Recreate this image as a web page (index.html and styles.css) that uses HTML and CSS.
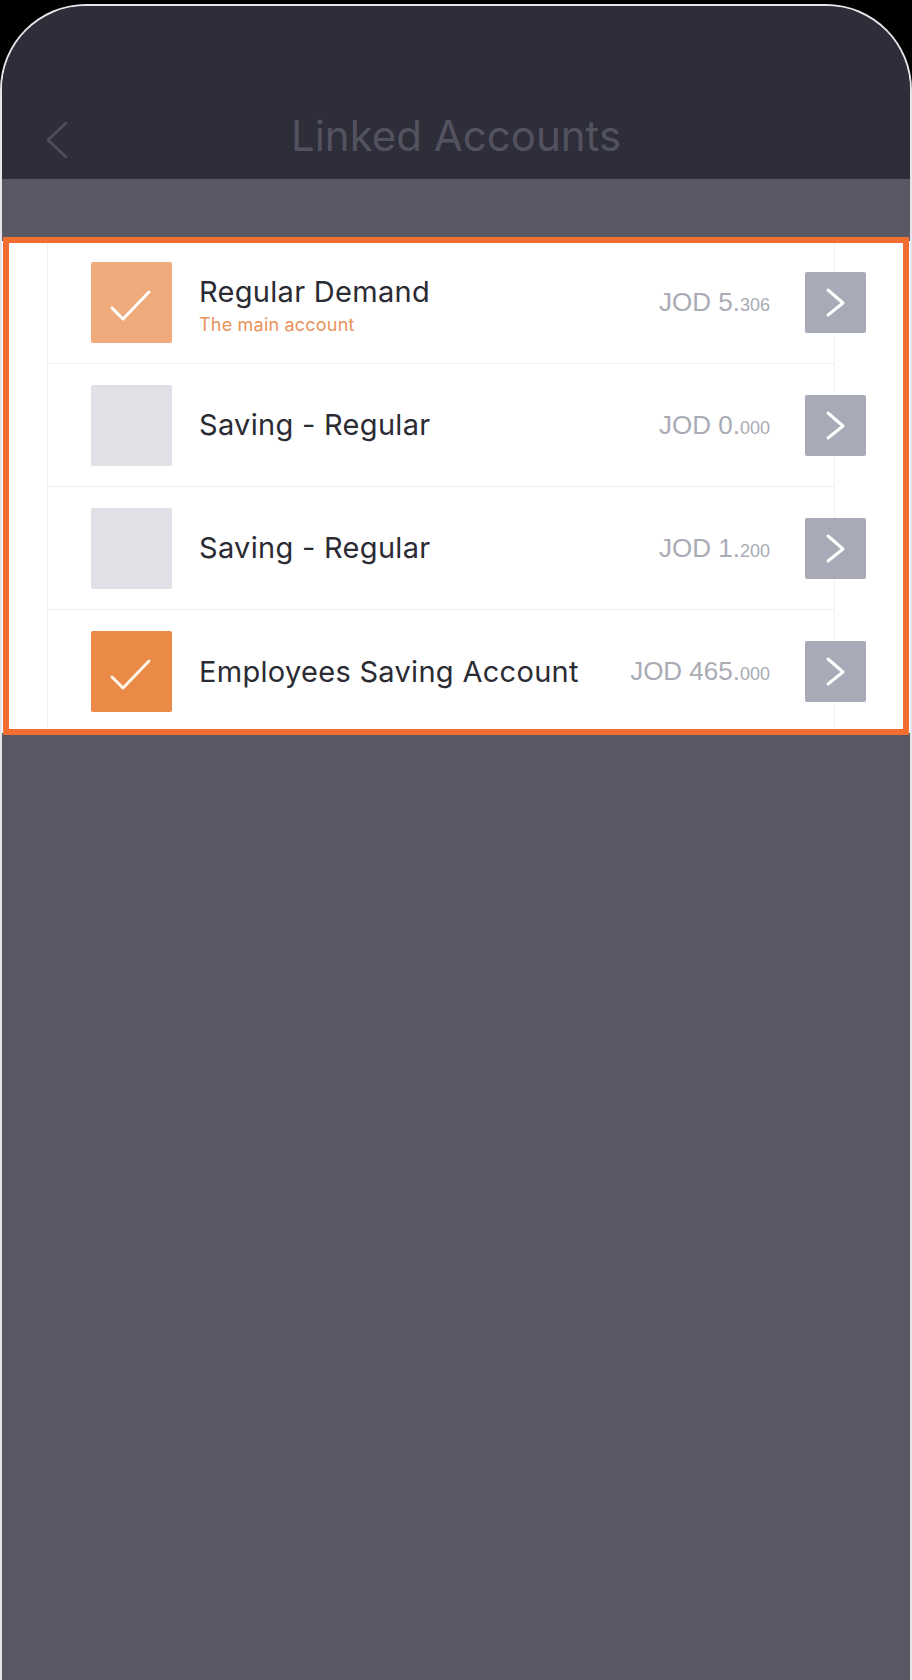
FILE: index.html
```html
<!DOCTYPE html>
<html lang="en">
<head>
    <meta charset="UTF-8">
    <title>Linked Accounts</title>
    <link rel="stylesheet" href="styles.css">
</head>
<body>
    <div class="phone">
        <header class="topbar">
            <button class="back" aria-label="Back">
                <svg width="26" height="40" viewBox="0 0 26 40"><polyline points="21,3 3,20 21,37" fill="none" stroke="#4f4e5d" stroke-width="2.6" stroke-linecap="round" stroke-linejoin="round"/></svg>
            </button>
            <h1>Linked Accounts</h1>
            <span></span>
        </header>

        <div class="spacer"></div>

        <section class="list">
            <div class="card">
                <div class="row">
                    <span class="check on light">
                        <svg width="81" height="81" viewBox="0 0 81 81"><polyline points="21,46 32,57 58,30" fill="none" stroke="#fff" stroke-width="3" stroke-linecap="round" stroke-linejoin="round"/></svg>
                    </span>
                    <div class="name with-sub">
                        <div class="title">Regular Demand</div>
                        <div class="sub">The main account</div>
                    </div>
                    <div class="amount">JOD 5.<small>306</small></div>
                    <span class="go"><svg width="61" height="61" viewBox="0 0 61 61"><polyline points="23,18 38,31 23,43" fill="none" stroke="#fff" stroke-width="3" stroke-linecap="round" stroke-linejoin="round"/></svg></span>
                </div>
                <div class="row">
                    <span class="check"></span>
                    <div class="name">
                        <div class="title">Saving - Regular</div>
                    </div>
                    <div class="amount">JOD 0.<small>000</small></div>
                    <span class="go"><svg width="61" height="61" viewBox="0 0 61 61"><polyline points="23,18 38,31 23,43" fill="none" stroke="#fff" stroke-width="3" stroke-linecap="round" stroke-linejoin="round"/></svg></span>
                </div>
                <div class="row">
                    <span class="check"></span>
                    <div class="name">
                        <div class="title">Saving - Regular</div>
                    </div>
                    <div class="amount">JOD 1.<small>200</small></div>
                    <span class="go"><svg width="61" height="61" viewBox="0 0 61 61"><polyline points="23,18 38,31 23,43" fill="none" stroke="#fff" stroke-width="3" stroke-linecap="round" stroke-linejoin="round"/></svg></span>
                </div>
                <div class="row">
                    <span class="check on">
                        <svg width="81" height="81" viewBox="0 0 81 81"><polyline points="21,46 32,57 58,30" fill="none" stroke="#fff6ea" stroke-width="3" stroke-linecap="round" stroke-linejoin="round"/></svg>
                    </span>
                    <div class="name">
                        <div class="title">Employees Saving Account</div>
                    </div>
                    <div class="amount">JOD 465.<small>000</small></div>
                    <span class="go"><svg width="61" height="61" viewBox="0 0 61 61"><polyline points="23,18 38,31 23,43" fill="none" stroke="#fff" stroke-width="3" stroke-linecap="round" stroke-linejoin="round"/></svg></span>
                </div>
            </div>
            <!-- highlight box drawn over the list -->
            <div class="highlight"></div>
        </section>
    </div>
</body>
</html>
```

FILE: styles.css
```css
* { box-sizing: border-box; }

body {
    margin: 0;
    background: #000;
    font-family: Inter, Lato, "Noto Sans", sans-serif;
    overflow: hidden;
}

.phone {
    margin-top: 4px;
    width: 912px;
    height: 1676px;
    border: 2px solid #e6e6ea;
    border-bottom: none;
    border-radius: 86px 86px 0 0;
    background: #595965;
    overflow: hidden;
}

.topbar {
    height: 173px;
    background: #2e2d3a;
    display: grid;
    grid-template-columns: 1fr auto 1fr;
    align-items: start;
    padding-top: 108px;
}
.topbar h1 {
    margin: 0;
    font-size: 42px;
    line-height: 44px;
    font-weight: 400;
    color: #53525f;
}
.back {
    background: none;
    border: 0;
    padding: 0;
    margin: 6px 0 0 43px;
    width: 26px;
    height: 40px;
    justify-self: start;
}
.back svg { display: block; }

.spacer { height: 62px; }

.list {
    position: relative;
    background: #fff;
    padding-left: 45px;
}

.card {
    width: 788px;
    border-left: 1px solid #f2f2f5;
    border-right: 1px solid #f2f2f5;
}

.row {
    display: flex;
    align-items: center;
    height: 123px;
    padding-left: 43px;
    border-bottom: 1px solid #efeff2;
}
.row:last-child { border-bottom: none; }

.check {
    flex: none;
    width: 81px;
    height: 81px;
    border-radius: 2px;
    background: #dfe1e6;
}
.check svg { display: block; }
.check.on { background: #eb8a47; }
.check.on.light { background: #efab7b; }

.name {
    flex: 1;
    margin-left: 27px;
    color: #2b2b33;
}
.name.with-sub { padding-top: 6px; }
.name .title {
    font-size: 29px;
    line-height: 36px;
    letter-spacing: 0.3px;
}
.name .sub {
    margin-top: 4px;
    font-size: 18px;
    line-height: 22px;
    letter-spacing: 0.2px;
    color: #e8935a;
}

.amount {
    font-family: "Liberation Sans", Arial, sans-serif;
    font-size: 26px;
    color: #a9abb5;
    white-space: nowrap;
}
.amount small { font-size: 18px; }

.go {
    flex: none;
    width: 61px;
    height: 61px;
    margin: 0 -32px 0 35px;
    border-radius: 2px;
    background: #a8abb7;
}
.go svg { display: block; }

.highlight {
    position: absolute;
    left: 1px;
    top: -4px;
    width: 906px;
    height: 498px;
    border: 6px solid #f26d30;
    pointer-events: none;
}
```
